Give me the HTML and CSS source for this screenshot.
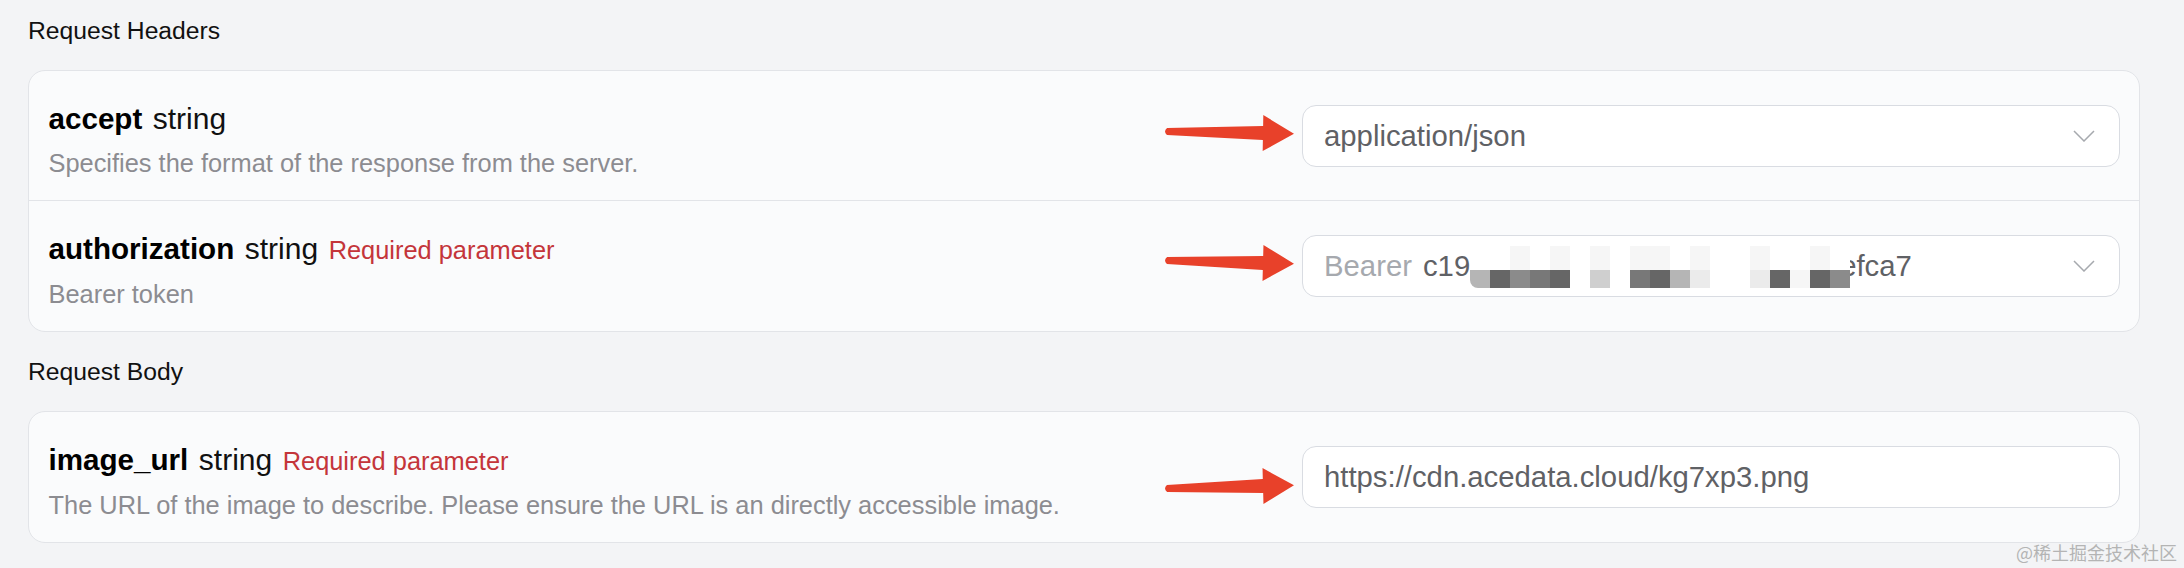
FILE: index.html
```html
<!DOCTYPE html>
<html lang="en">
<head>
<meta charset="utf-8">
<title>Request parameters</title>
<link rel="stylesheet" href="styles.css">
</head>
<body>
<div class="page">
  <div class="section-title">Request Headers</div>
  <div class="card">
    <div class="row">
      <div class="info">
        <div class="head"><span class="name">accept</span><span class="type">string</span></div>
        <div class="desc">Specifies the format of the response from the server.</div>
      </div>
      <div class="field">
        <svg class="arrow arrow-a" viewBox="0 0 132 40" width="132" height="40"><path d="M4 16.5 L100 13 L100 2 L131 20 L100 38 L100 27 L4 23.5 Q0 20 4 16.5 Z"/></svg>
        <div class="input">
          <span class="value">application/json</span>
          <svg class="chevron" viewBox="0 0 22 12" width="22" height="12"><polyline points="1,1 11,11 21,1"/></svg>
        </div>
      </div>
    </div>
    <div class="row row-split">
      <div class="info">
        <div class="head"><span class="name">authorization</span><span class="type">string</span><span class="req">Required parameter</span></div>
        <div class="desc">Bearer token</div>
      </div>
      <div class="field">
        <svg class="arrow arrow-b" viewBox="0 0 132 40" width="132" height="40"><path d="M4 16.5 L100 13 L100 2 L131 20 L100 38 L100 27 L4 23.5 Q0 20 4 16.5 Z"/></svg>
        <div class="input">
          <span class="prefix">Bearer</span>
          <span class="value">c19</span>
          <div class="mosaic">
            <div class="mrow mtop">
              <i class="w"></i><i class="w"></i><i class="f"></i><i class="w"></i><i class="f"></i><i class="w"></i><i class="f"></i><i class="w"></i><i class="f"></i><i class="f"></i><i class="w"></i><i class="f"></i><i class="w"></i><i class="w"></i><i class="f"></i><i class="w"></i><i class="w"></i><i class="f"></i><i class="w"></i>
            </div>
            <div class="mrow mbottom">
              <i class="s4 first"></i><i class="s1"></i><i class="s3"></i><i class="s2"></i><i class="s1"></i><i class="w"></i><i class="s5"></i><i class="w"></i><i class="s2"></i><i class="s1"></i><i class="s4"></i><i class="s6"></i><i class="w"></i><i class="w"></i><i class="s6"></i><i class="s1"></i><i class="f"></i><i class="s1"></i><i class="s3 last"></i>
            </div>
          </div>
          <span class="value tail">efca7</span>
          <svg class="chevron" viewBox="0 0 22 12" width="22" height="12"><polyline points="1,1 11,11 21,1"/></svg>
        </div>
      </div>
    </div>
  </div>

  <div class="section-title">Request Body</div>
  <div class="card">
    <div class="row">
      <div class="info">
        <div class="head"><span class="name">image_url</span><span class="type">string</span><span class="req">Required parameter</span></div>
        <div class="desc">The URL of the image to describe. Please ensure the URL is an directly accessible image.</div>
      </div>
      <div class="field">
        <svg class="arrow arrow-c" viewBox="0 0 132 40" width="132" height="40"><path d="M4 16.5 L100 13 L100 2 L131 20 L100 38 L100 27 L4 23.5 Q0 20 4 16.5 Z"/></svg>
        <div class="input">
          <span class="value">https://cdn.acedata.cloud/kg7xp3.png</span>
        </div>
      </div>
    </div>
  </div>
</div>
<div class="watermark">@稀土掘金技术社区</div>
</body>
</html>
```

FILE: styles.css
```css
html, body {
  margin: 0;
  padding: 0;
}

body {
  width: 2184px;
  height: 568px;
  overflow: hidden;
  background: #f3f4f6;
  font-family: "Liberation Sans", Arial, "Noto Sans CJK SC", sans-serif;
  color: #111;
  position: relative;
}

.page {
  padding: 11px 44px 0 28px;
}

.section-title {
  font-size: 24.7px;
  line-height: 40px;
  color: #111;
}

.card {
  margin: 19px 0 20px;
  background: #fafbfc;
  border: 1.5px solid #e2e4e8;
  border-radius: 17px;
}

.row {
  display: flex;
  align-items: center;
  justify-content: space-between;
  padding: 0 19px 0 19.5px;
}

.row-split {
  border-top: 1.5px solid #e2e4e8;
}

.info {
  display: flex;
  flex-direction: column;
  gap: 4px;
  padding: 28px 0 17px;
}

.head {
  display: flex;
  align-items: baseline;
  gap: 10.5px;
  line-height: 40px;
}

.name {
  font-weight: 700;
  font-size: 29.6px;
  color: #000;
}

.type {
  font-size: 30px;
  color: #111;
}

.req {
  font-size: 25.4px;
  color: #c4353a;
}

.desc {
  font-size: 25.4px;
  line-height: 40px;
  color: #8c8c91;
}

.field {
  position: relative;
  width: 818px;
}

.arrow {
  position: absolute;
  right: calc(100% + 7px);
  top: 50%;
  fill: #e8412a;
}

.arrow-a {
  transform: translateY(-23.5px) rotate(1deg);
}

.arrow-b {
  transform: translateY(-24px) rotate(1.5deg);
}

.arrow-c {
  transform: translateY(-10px) rotate(-1.5deg);
}

.input {
  height: 62px;
  box-sizing: border-box;
  border: 1.5px solid #d9dce2;
  border-radius: 14px;
  background: #fff;
  display: flex;
  align-items: center;
  padding: 0 24px 0 21px;
  font-size: 29.3px;
  color: #5f6165;
}

.prefix {
  color: #a6a9ae;
  margin-right: 11px;
}

.chevron {
  margin-left: auto;
  fill: none;
  stroke: #a6a9ae;
  stroke-width: 1.5;
}

.mosaic {
  display: flex;
  flex-direction: column;
  margin-top: 2px;
  position: relative;
  z-index: 1;
}

.tail {
  margin-left: -10px;
}

.mrow {
  display: flex;
}

.mrow i {
  display: block;
  width: 20px;
}

.mtop i {
  height: 24px;
}

.mbottom i {
  height: 18px;
}

.mosaic .w { background: #ffffff; }
.mosaic .f { background: #f6f6f6; }
.mosaic .s1 { background: #666666; }
.mosaic .s2 { background: #787878; }
.mosaic .s3 { background: #8b8b8b; }
.mosaic .s4 { background: #b5b5b5; }
.mosaic .s5 { background: #cfcfcf; }
.mosaic .s6 { background: #ebebeb; }
.mosaic .first { border-bottom-left-radius: 8px; }

.watermark {
  position: absolute;
  right: 7px;
  bottom: 6px;
  font-family: "Noto Sans CJK SC", sans-serif;
  font-size: 18px;
  line-height: 20px;
  color: #b4b4b4;
}
```
